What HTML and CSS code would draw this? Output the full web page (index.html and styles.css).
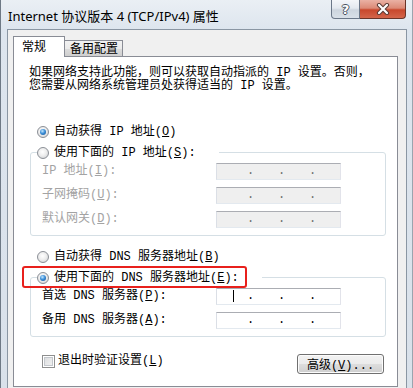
FILE: index.html
```html
<!DOCTYPE html>
<html lang="zh-CN">
<head>
    <meta charset="UTF-8">
    <title>Internet 协议版本 4 (TCP/IPv4) 属性</title>
    <link rel="stylesheet" href="styles.css">
</head>
<body>

<div class="window">
    <div class="titlebar">
        <div class="title">Internet 协议版本 4 (TCP/IPv4) 属性</div>
        <div class="caption-btns">
            <div class="cap help">?</div>
            <div class="cap close">
                <svg width="14" height="12" viewBox="0 0 14 12">
                    <path d="M3 2 L11 10 M11 2 L3 10" stroke="#5b3b35" stroke-width="4.2" stroke-linecap="round"/>
                    <path d="M3 2 L11 10 M11 2 L3 10" stroke="#fff" stroke-width="2.2" stroke-linecap="round"/>
                </svg>
            </div>
        </div>
    </div>

    <div class="client">
        <div class="tabs">
            <div class="tab active">常规</div>
            <div class="tab">备用配置</div>
        </div>

        <div class="panel">
            <p class="intro">如果网络支持此功能，则可以获取自动指派的 IP 设置。否则，<br>您需要从网络系统管理员处获得适当的 IP 设置。</p>

            <div class="opt top-opt"><span class="radio on"></span>自动获得 IP 地址(<u>O</u>)</div>

            <fieldset class="group">
                <legend><span class="opt"><span class="radio"></span>使用下面的 IP 地址(<u>S</u>):</span></legend>
                <div class="fields off">
                    <label>IP 地址(<u>I</u>):</label>
                    <div class="ipbox"><span>.</span><span>.</span><span>.</span></div>
                    <label>子网掩码(<u>U</u>):</label>
                    <div class="ipbox"><span>.</span><span>.</span><span>.</span></div>
                    <label>默认网关(<u>D</u>):</label>
                    <div class="ipbox"><span>.</span><span>.</span><span>.</span></div>
                </div>
            </fieldset>

            <div class="opt dns-opt"><span class="radio"></span>自动获得 DNS 服务器地址(<u>B</u>)</div>

            <fieldset class="group">
                <legend class="marked"><span class="opt"><span class="radio on"></span>使用下面的 DNS 服务器地址(<u>E</u>):</span></legend>
                <div class="fields">
                    <label>首选 DNS 服务器(<u>P</u>):</label>
                    <div class="ipbox"><i class="caret"></i><span>.</span><span>.</span><span>.</span></div>
                    <label>备用 DNS 服务器(<u>A</u>):</label>
                    <div class="ipbox"><span>.</span><span>.</span><span>.</span></div>
                </div>
            </fieldset>

            <div class="footer-row">
                <label class="check"><span class="box"></span>退出时验证设置(<u>L</u>)</label>
                <button class="btn">高级(<u>V</u>)...</button>
            </div>
        </div>
    </div>
</div>

</body>
</html>
```

FILE: styles.css
```css
body {
    margin: 0;
    width: 413px;
    height: 388px;
    overflow: hidden;
    font-family: "Liberation Mono", "Noto Sans CJK SC", monospace;
    font-size: 12px;
    color: #000;
    background: #dfe7ef;
}
.window {
    height: 388px;
    overflow: hidden;
    background: linear-gradient(180deg, #eaeff4 0, #dde5ee 30px, #d9e1ea 100%);
    box-shadow: inset 1px 0 0 #6e7985, inset -1px 0 0 #9aa4ae;
}
.titlebar {
    height: 29px;
    display: flex;
}
.title {
    padding-left: 8px;
    align-self: center;
    margin-top: 1px;
    font-family: "Noto Sans", "Noto Sans CJK SC", sans-serif;
    font-size: 13px;
    color: #000;
}
.caption-btns {
    margin-left: auto;
    margin-right: 7px;
    display: flex;
    align-self: flex-start;
}
.cap {
    height: 19px;
    box-sizing: border-box;
    display: flex;
    align-items: center;
    justify-content: center;
    border: 1px solid #6b7788;
    border-top: none;
}
.help {
    width: 29px;
    border-radius: 0 0 0 4px;
    background: linear-gradient(180deg, #f4f6f9 0, #e4e9ef 45%, #cdd5de 55%, #d9e0e8 100%);
    color: #fff;
    font-family: "DejaVu Sans", sans-serif;
    font-weight: bold;
    font-size: 13px;
    text-shadow: 1px 0 0 #4a5260, -1px 0 0 #4a5260, 0 1px 0 #4a5260, 0 -1px 0 #4a5260;
}
.close {
    width: 46px;
    border-left: none;
    border-color: #6a3428;
    border-radius: 0 0 4px 0;
    background: linear-gradient(180deg, #eab1a4 0, #dc8a77 45%, #c8472c 55%, #d4654a 100%);
}
.client {
    margin: 0 6px 0 7px;
    height: 359px;
    box-sizing: border-box;
    overflow: hidden;
    border: 1px solid #8a96a3;
    border-bottom: none;
    background: #f0f0f0;
    padding: 6px 8px 0 5px;
}
.tabs {
    display: flex;
    align-items: flex-end;
    position: relative;
    z-index: 1;
    margin-bottom: -1px;
    font-family: "Noto Sans", "Noto Sans CJK SC", sans-serif;
    font-size: 12px;
}
.tab {
    box-sizing: border-box;
    height: 16px;
    line-height: 15px;
    padding: 0 4px 0 5px;
    margin-bottom: 1px;
    border: 1px solid #898c95;
    border-left: none;
    border-bottom: none;
    background: linear-gradient(180deg, #f2f2f2 0, #ebebeb 50%, #dddddd 50%, #cfcfcf 100%);
}
.tab.active {
    width: 52px;
    height: 21px;
    line-height: 19px;
    padding-left: 8px;
    margin-bottom: 0;
    border-left: 1px solid #898c95;
    background: #fff;
}
.panel {
    border: 1px solid #898c95;
    background: #fff;
    padding: 0 11px 12px 16px;
}
.intro {
    margin: 10px 0 0 -1px;
    line-height: 13px;
}
.opt {
    display: flex;
    align-items: center;
    height: 16px;
    line-height: 16px;
    white-space: nowrap;
}
.top-opt {
    margin: 31px 0 0 7px;
}
.dns-opt {
    margin: 13px 0 0 7px;
}
.radio {
    width: 12px;
    height: 12px;
    box-sizing: border-box;
    border-radius: 50%;
    border: 1px solid #8b8f96;
    background: radial-gradient(circle at 45% 40%, #ffffff 0, #eeeeee 45%, #c9cbcf 100%);
    margin-right: 5px;
    display: flex;
    align-items: center;
    justify-content: center;
    flex-shrink: 0;
}
.radio.on::after {
    content: "";
    width: 6px;
    height: 6px;
    border-radius: 50%;
    background: radial-gradient(circle at 40% 35%, #c6e9ff 0, #3d8fd8 45%, #124e8e 100%);
}
.group {
    margin: 4px 0 0;
    padding: 2px 0 7px 6px;
    border: 1px solid #d5dfe5;
    border-radius: 3px;
    min-width: 0;
}
.group legend {
    padding: 0 23px 0 0;
    line-height: 17px;
    position: relative;
}
.group legend .opt {
    height: 17px;
}
.marked::after {
    content: "";
    position: absolute;
    left: -15px;
    top: -3px;
    width: 225px;
    height: 22px;
    box-sizing: border-box;
    border: 2px solid #e8201c;
    border-radius: 3px;
}
.fields {
    margin-left: 5px;
    display: grid;
    grid-template-columns: 174px 125px;
    grid-auto-rows: 17px;
    row-gap: 7px;
    line-height: 17px;
}
.fields.off label {
    color: #a3a3a3;
}
.ipbox {
    box-sizing: border-box;
    height: 17px;
    display: flex;
    padding-left: 18px;
    line-height: 15px;
    border: 1px solid;
    border-color: #abadb3 #e2e3ea #e3e9ef #dbdfe6;
    background: #fff;
}
.off .ipbox {
    background: #efefef;
    color: #6d6d6d;
}
.ipbox span {
    width: 31px;
    text-align: center;
}
.caret {
    width: 1px;
    height: 12px;
    margin: 1px 1px 0 -2px;
    background: #000;
}
.footer-row {
    margin-top: 17px;
    display: flex;
    align-items: flex-start;
}
.check {
    margin-left: 12px;
    display: flex;
    align-items: center;
    line-height: 14px;
    height: 14px;
}
.box {
    width: 13px;
    height: 13px;
    box-sizing: border-box;
    margin-right: 3px;
    border: 1px solid #8e8f8f;
    background: linear-gradient(135deg, #d8dadc 0, #f4f4f4 100%);
    box-shadow: inset 0 0 0 1px #fff, inset 0 0 0 2px #c3c7cc;
}
.btn {
    margin-left: auto;
    margin-right: 2px;
    width: 87px;
    height: 20px;
    padding: 0;
    font: inherit;
    color: #000;
    border: 1px solid #707070;
    border-radius: 3px;
    background: linear-gradient(180deg, #f2f2f2 0, #ebebeb 50%, #dddddd 50%, #cfcfcf 100%);
    box-shadow: inset 0 0 0 1px #fcfcfc;
}
u {
    text-decoration: underline;
}
```
